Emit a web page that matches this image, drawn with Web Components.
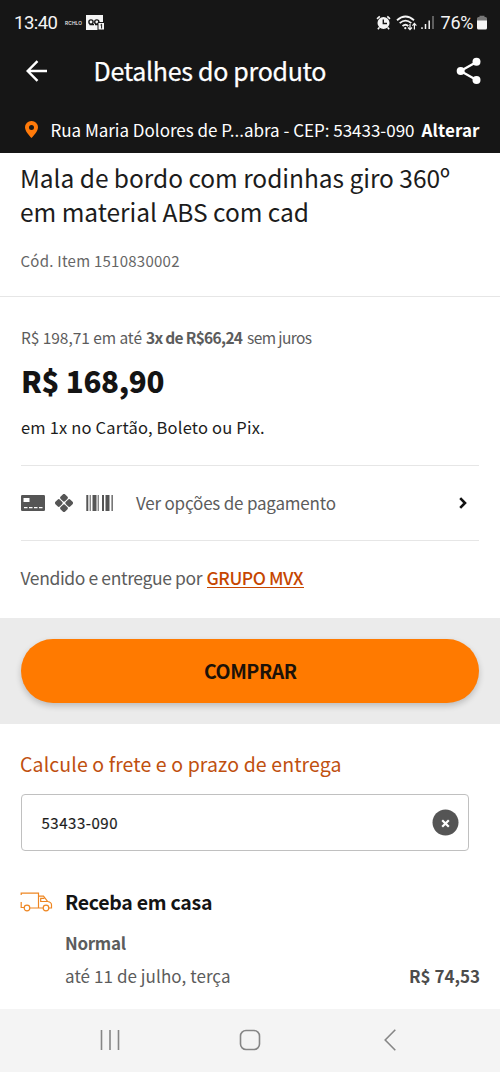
<!DOCTYPE html>
<html lang="pt-BR">
<head>
<meta charset="utf-8">
<title>Detalhes do produto</title>
<style>
html,body{margin:0;background:#fff;font-family:"Noto Sans CJK SC","Noto Sans",sans-serif;color:#1c1c1c}
body{width:500px;height:1072px;overflow:hidden}
</style>
</head>
<body>
<product-page></product-page>
<script>
const define = (name, html, setup) => {
  const t = document.createElement('template');
  t.innerHTML = html;
  customElements.define(name, class extends HTMLElement {
    connectedCallback() {
      if (this.shadowRoot) return;
      this.attachShadow({mode: 'open'}).append(t.content.cloneNode(true));
      if (setup) setup(this, this.shadowRoot);
    }
  });
};

/* One line of text tracked to fill the width given in "w". */
define('text-line', `<style>
:host{display:block;white-space:nowrap;flex:none}
span{display:inline-block;white-space:pre}
</style><span><slot></slot></span>`, (el, root) => {
  const s = root.querySelector('span'), w = +el.getAttribute('w');
  el.style.fontSize = el.getAttribute('size') + 'px';
  el.style.lineHeight = el.getAttribute('lh') + 'px';
  el.style.height = el.getAttribute('lh') + 'px';
  el.style.width = w + 'px';
  s.style.letterSpacing = (w - s.getBoundingClientRect().width) / (el.textContent.length - 1) + 'px';
});

define('status-bar', `<style>
:host{display:flex;height:45px;box-sizing:border-box;padding:0 13px 0 14px;align-items:center;color:#f4f4f4;font-family:Roboto,sans-serif}
svg{display:block;flex:none}.s{flex:1}
.r{margin:0 4px 0 7px;font-weight:500;font-family:Inter,sans-serif}
</style>
<text-line size="18.5" lh="24" w="44">13:40</text-line>
<text-line class="r" size="4.8" lh="8" w="17">RCHLO</text-line>
<svg width="19" height="16" viewBox="0 0 19 16"><path fill="#f4f4f4" d="M0 0h17v15H0z"/><g fill="none" stroke="#161616" stroke-width="1.4"><circle cx="5" cy="7" r="2.1"/><circle cx="10.8" cy="7" r="2.1"/><path d="M3.5 9.6H8M9 9.6h3"/></g><path d="M12 7.500h6.500v7.500H12z" fill="#f4f4f4" stroke="#161616"/><path d="M14.5 10l1.100-.8V13.500" fill="none" stroke="#161616"/></svg>
<div class="s"></div>
<svg width="16" height="16" viewBox="0 0 16 16"><circle cx="7.5" cy="8" r="6" fill="#f4f4f4"/><path d="M1 3.8l2.8-2.5M11.3 1.3L14 3.8M3.3 12.5l-1.4 1.7M11.7 12.5l1.4 1.7" stroke="#f4f4f4" stroke-width="1.6" fill="none"/><path d="M7.3 4.5v4H11" fill="none" stroke="#161616" stroke-width="1.4"/></svg>
<svg width="21" height="18" viewBox="0 0 21 18" style="margin-left:4.5px"><g fill="none" stroke="#f4f4f4" stroke-width="1.8"><path d="M1 6.2Q9.5-1.2 18 6.2M3.7 9.2Q9.5 4 15.3 9.2M6.5 12Q9.5 9.4 12.3 12"/></g><circle cx="9.3" cy="14.2" r="1.1" fill="#f4f4f4"/><path d="M14 10v5.5m-2-2l2 2.2 2-2.2M18.4 15.5V9.6m-2 2l2-2.2 2 2.2" fill="none" stroke="#f4f4f4" stroke-width="1.2"/></svg>
<svg width="13" height="15" viewBox="0 0 13 15" style="margin-left:4px"><path d="M1 12.200V14M4.500 9v5M8.200 5.500V14" stroke="#f4f4f4" stroke-width="1.500"/><path d="M12 1v13" stroke="#777" stroke-width="1.500"/></svg>
<text-line size="18" lh="24" w="33" style="margin:0 3.5px 0 6.500px">76%</text-line>
<svg width="10" height="15" viewBox="0 0 10 15"><path d="M0 6V3.5Q0 2 1.5 2H2.5V.7h5V2h1Q10 2 10 3.5V6z" fill="#777"/><path d="M0 5.5h10V13q0 1.5-1.5 1.5h-7Q0 14.500 0 13z" fill="#f4f4f4"/></svg>`);

define('app-bar', `<style>
:host{display:flex;height:54px;box-sizing:border-box;align-items:center;padding:0 18px 2px 26px;color:#fff}
svg{flex:none}.s{flex:1}text-line{margin-left:45.5px;margin-top:-2px;-webkit-text-stroke:.25px #fff}
</style>
<svg width="22" height="22" viewBox="0 0 22 22" fill="none" stroke="#fff" stroke-width="2.4"><path d="M21 11H2M11.500 1.200L1.700 11l9.800 9.800"/></svg>
<text-line size="25" lh="34" w="233">Detalhes do produto</text-line><div class="s"></div>
<svg width="26" height="28" viewBox="0 0 26 28"><path d="M20.500 5L4.500 14l16 9" fill="none" stroke="#fff" stroke-width="2.300"/><g fill="#fff"><circle cx="20.500" cy="4.800" r="4"/><circle cx="4.700" cy="14" r="4"/><circle cx="20.500" cy="23" r="4"/></g></svg>`);

define('address-bar', `<style>
:host{display:flex;height:54px;box-sizing:border-box;align-items:center;padding:7px 20px 0 25px;color:#fff}
svg{flex:none;margin:-1px 12.5px 0 0}b{margin-left:7px}
</style>
<svg width="13" height="17" viewBox="0 0 13 17"><path fill="#ff7a0a" fill-rule="evenodd" d="M6.500 0A6.400 6.400 0 0 0 0 6.300C0 11 6.500 17 6.500 17S13 11 13 6.300A6.400 6.400 0 0 0 6.500 0zm0 3.900a2.500 2.500 0 1 1 0 5 2.500 2.500 0 0 1 0-5z"/></svg>
<text-line size="17" lh="24" w="364">Rua Maria Dolores de P...abra - CEP: 53433-090</text-line>
<b><text-line size="17" lh="24" w="58">Alterar</text-line></b>`);

define('product-title', `<style>
:host{display:block;height:144px;box-sizing:border-box;padding:8px 20px 0;border-bottom:1px solid #e6e6e6}
.c{color:#666;margin-top:23px;margin-left:.5px}
</style>
<text-line size="24.5" lh="33.5" w="430">Mala de bordo com rodinhas giro 360º</text-line>
<text-line size="24.5" lh="33.5" w="289">em material ABS com cad</text-line>
<text-line class="c" size="15" lh="20" w="159">Cód. Item 1510830002</text-line>`);

define('price-block', `<style>
:host{display:block;height:169px;box-sizing:border-box;padding:30px 0 0;margin:0 21px;border-bottom:1px solid #e6e6e6}
.p{display:flex;color:#5c5c5c}.v{font-weight:900;margin-top:13px;color:#141414}.e{margin-top:15px;color:#1c1c1c}
</style>
<div class="p"><text-line size="15.5" lh="20" w="121">R$ 198,71 em até</text-line><b style="margin:0 4px"><text-line size="15.500" lh="20" w="97">3x de R$66,24</text-line></b><text-line size="15.500" lh="20" w="65">sem juros</text-line></div>
<text-line class="v" size="29.5" lh="40" w="143.5">R$ 168,90</text-line>
<text-line class="e" size="16.5" lh="24" w="243.5">em 1x no Cartão, Boleto ou Pix.</text-line>`);

define('payment-row', `<style>
:host{display:flex;height:75px;box-sizing:border-box;align-items:center;margin:0 21px;border-bottom:1px solid #e6e6e6;color:#5c5c5c}
svg{flex:none}.s{flex:1}text-line{margin:-1px 0 0 23px}
</style>
<svg width="24" height="16" viewBox="0 0 24 16"><rect width="24" height="16" rx="1.200" fill="#555"/><path fill="#fff" d="M2.500 3h6v4h-6zM3 12h3.500v1.300H3zM8 12h3.500v1.300H8zM13 12h3.500v1.300H13zM18 12h3.500v1.300H18z"/></svg>
<svg width="18" height="18" viewBox="0 0 18 18" style="margin:0 13px 0 10px" fill="#555"><g transform="translate(9 9) rotate(45)"><rect x="-6.900" y="-6.900" width="6.400" height="6.400" rx="1.700"/><rect x=".5" y="-6.900" width="6.400" height="6.400" rx="1.700"/><rect x="-6.900" y=".5" width="6.400" height="6.400" rx="1.700"/><rect x=".5" y=".5" width="6.400" height="6.400" rx="1.700"/></g></svg>
<svg width="27" height="16" viewBox="0 0 27 16"><path fill="#555" d="M.3 0h2v16h-2zM3.700 0h1v16h-1zM6.500 0h4v16h-4zM11.700 0h1v16h-1zM16 0h2v16h-2zM19.500 0h4v16h-4zM25.500 0h1.300v16h-1.300z"/></svg>
<text-line size="17" lh="24" w="200">Ver opções de pagamento</text-line><div class="s"></div>
<svg width="8" height="12" viewBox="0 0 8 12" style="margin-right:12px"><path d="M1.200 1.200L6 6l-4.800 4.800" fill="none" stroke="#111" stroke-width="2.600"/></svg>`);

define('seller-line', `<style>
:host{display:flex;height:77px;box-sizing:border-box;padding:25px 20px 0 20.5px;color:#5c5c5c}
a{color:#c64600;font-weight:500;margin-left:4px;height:21px;border-bottom:1px solid #c64600}
</style>
<text-line size="17.500" lh="24" w="182">Vendido e entregue por</text-line>
<a><text-line size="17.500" lh="24" w="97">GRUPO MVX</text-line></a>`);

define('buy-bar', `<style>
:host{display:block;height:106px;box-sizing:border-box;padding:21px;background:#ebebeb}
button{all:unset;display:flex;width:458px;height:64px;box-sizing:border-box;padding:0 0 1px 1px;align-items:center;justify-content:center;border-radius:32px;background:#ff7a00;color:#1c1208;font-weight:700;box-shadow:0 3px 6px #0003}
</style><button><text-line size="19.5" lh="28" w="93">COMPRAR</text-line></button>`);

define('shipping-form', `<style>
:host{display:block;height:164px;box-sizing:border-box;padding:26px 20px 0;color:#c0500f}
.f{display:flex;align-items:center;width:448px;height:57px;box-sizing:border-box;margin:16px 0 0 .500px;padding:0 9px 0 20px;border:1.500px solid #c0c0c0;border-radius:4px;color:#1c1c1c;justify-content:space-between}
.f text-line{-webkit-text-stroke:.2px #1c1c1c}
</style>
<text-line size="19.500" lh="28" w="321.5">Calcule o frete e o prazo de entrega</text-line>
<div class="f"><text-line size="15" lh="22" w="76">53433-090</text-line>
<svg width="27" height="27" viewBox="0 0 27 27"><circle cx="13.500" cy="13.500" r="13" fill="#555"/><path d="M10.200 11.200l6.600 6.600m0-6.600l-6.600 6.600" stroke="#fff" stroke-width="2.200"/></svg></div>`);

define('delivery-option', `<style>
:host{display:grid;grid-template-columns:45px 1fr;height:121px;padding:0 20px;color:#5c5c5c;align-content:start}
svg{margin-top:4px}b{color:#141414}
.n{margin-top:15px;font-weight:700}.d{display:flex;justify-content:space-between;margin-top:9px}
</style>
<svg width="33" height="20" viewBox="0 0 33 20" fill="none" stroke="#ee8622" stroke-width="1.200"><path d="M1.200 3V1.200h17.300V16H10M1.200 10v5.500H4M18.500 4.200h5l4.200 5.300c3 .5 3.800 1.800 3.800 3.500v3H29M18.500 16h4.700M27.700 9.500h-7V6.300h3.600"/><circle cx="7" cy="16" r="2.800"/><circle cx="26" cy="16" r="2.800"/></svg>
<div><b><text-line size="19.500" lh="28" w="147.5">Receba em casa</text-line></b>
<text-line class="n" size="17" lh="24" w="61">Normal</text-line>
<div class="d"><text-line size="17" lh="24" w="165.5">até 11 de julho, terça</text-line><b style="color:#4c4c4c"><text-line size="17" lh="24" w="71">R$ 74,53</text-line></b></div></div>`);

define('nav-bar', `<style>
:host{display:grid;grid-template-columns:140px 140px 140px;justify-content:center;height:63px;box-sizing:border-box;padding-bottom:2px;place-items:center;background:#f4f4f4}
svg{display:block}
</style>
<svg width="20" height="20" viewBox="0 0 20 20"><path d="M1.500 0v20M10 0v20M18.500 0v20" stroke="#868686" stroke-width="1.600"/></svg>
<svg width="22" height="22" viewBox="0 0 22 22"><rect x="1.500" y="1.500" width="19" height="19" rx="5.500" fill="none" stroke="#868686" stroke-width="1.600"/></svg>
<svg width="12" height="22" viewBox="0 0 12 22"><path d="M11.300 .800L1.200 11l10.100 10.200" fill="none" stroke="#868686" stroke-width="1.600"/></svg>`);

define('product-page', `<style>
:host{display:flex;flex-direction:column;width:500px;height:1072px;background:#fff}
header{background:#161616;height:153px;flex:none}
</style>
<header><status-bar></status-bar><app-bar></app-bar><address-bar></address-bar></header>
<main><product-title></product-title><price-block></price-block><payment-row></payment-row><seller-line></seller-line><buy-bar></buy-bar><shipping-form></shipping-form><delivery-option></delivery-option></main>
<nav-bar></nav-bar>`);
</script>
</body>
</html>
